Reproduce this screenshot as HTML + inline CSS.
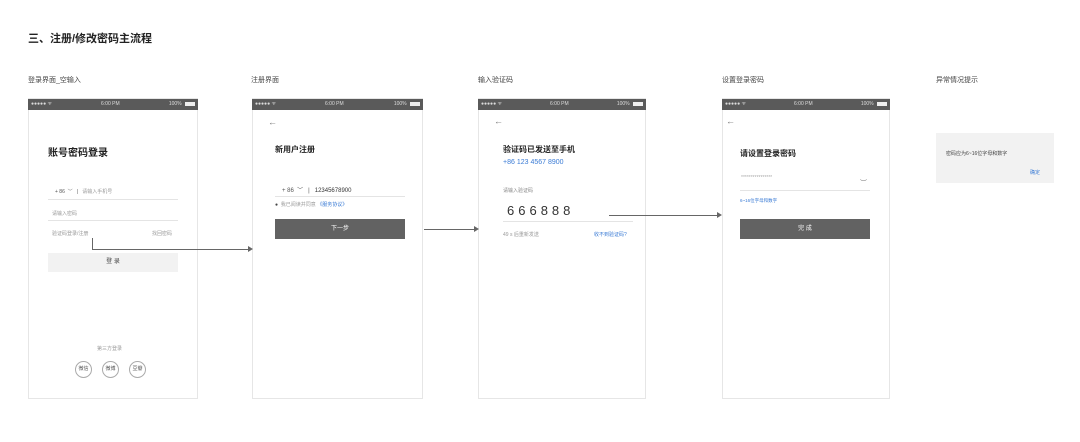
<!DOCTYPE html>
<html><head><meta charset="utf-8"><style>
*{margin:0;padding:0;box-sizing:border-box}
body{width:1080px;height:442px;background:#fff;position:relative;overflow:hidden;font-family:"Liberation Sans","Noto Sans CJK SC",sans-serif;color:#333}
.a{position:absolute;white-space:nowrap}
.ph{position:absolute;top:98px;height:301px;border:1px solid #e6e6e6;background:#fff}
.sb{position:absolute;left:-1px;right:-1px;top:0;height:11px;background:#5a5a5a;color:#ddd;font-size:5px}
.sb span{position:absolute;top:2px}
.bat{display:inline-block;width:10px;height:4px;background:#eee;vertical-align:middle;margin-left:2px}
.ln{position:absolute;height:1px;background:#e4e4e4}
.btn{position:absolute;height:20px;background:#626262;color:#fff;font-size:6px;text-align:center;line-height:20px}
.hl{position:absolute;height:1px;background:#666}
.vl{position:absolute;width:1px;background:#666}
.ah{position:absolute;width:0;height:0;border-top:3px solid transparent;border-bottom:3px solid transparent;border-left:5px solid #666}
.t{font-size:10px;font-weight:bold;color:#222}
.s{font-size:5px;color:#999}
.c{position:absolute;width:17px;height:17px;border:1px solid #aaa;border-radius:50%;font-size:5px;color:#555;text-align:center;line-height:15px}
</style></head><body>
<div class="a" style="left:28px;top:30px;font-size:11px;font-weight:bold;color:#222">三、注册/修改密码主流程</div>
<div class="a" style="left:28px;top:75px;font-size:7px;color:#444">登录界面_空输入</div>
<div class="a" style="left:251px;top:75px;font-size:7px;color:#444">注册界面</div>
<div class="a" style="left:478px;top:75px;font-size:7px;color:#444">输入验证码</div>
<div class="a" style="left:722px;top:75px;font-size:7px;color:#444">设置登录密码</div>
<div class="a" style="left:936px;top:75px;font-size:7px;color:#444">异常情况提示</div>

<!-- phones -->
<div class="ph" style="left:28px;width:170px"><div class="sb"><span style="left:3px">●●●●● ᯤ</span><span style="left:73px">6:00 PM</span><span style="right:3px">100% <i class="bat"></i></span></div></div>
<div class="ph" style="left:252px;width:171px"><div class="sb"><span style="left:3px">●●●●● ᯤ</span><span style="left:73px">6:00 PM</span><span style="right:3px">100% <i class="bat"></i></span></div></div>
<div class="ph" style="left:478px;width:168px"><div class="sb"><span style="left:3px">●●●●● ᯤ</span><span style="left:72px">6:00 PM</span><span style="right:3px">100% <i class="bat"></i></span></div></div>
<div class="ph" style="left:722px;width:168px"><div class="sb"><span style="left:3px">●●●●● ᯤ</span><span style="left:72px">6:00 PM</span><span style="right:3px">100% <i class="bat"></i></span></div></div>

<!-- frame 1 -->
<div class="a t" style="left:48px;top:144px">账号密码登录</div>
<div class="a" style="left:55px;top:188px;font-size:5px;color:#555">+ 86 &nbsp;﹀ &nbsp;&nbsp;|&nbsp;&nbsp; <span style="color:#999">请输入手机号</span></div>
<div class="ln" style="left:48px;top:199px;width:130px"></div>
<div class="a s" style="left:52px;top:210px">请输入密码</div>
<div class="ln" style="left:48px;top:220px;width:130px"></div>
<div class="a s" style="left:52px;top:230px">验证码登录/注册</div>
<div class="a s" style="left:152px;top:230px">找回密码</div>
<div class="btn" style="left:48px;top:253px;width:130px;height:19px;line-height:19px;background:#f2f2f2;color:#444">登 录</div>
<div class="a s" style="left:97px;top:345px">第三方登录</div>
<div class="c" style="left:75px;top:361px">微信</div>
<div class="c" style="left:102px;top:361px">微博</div>
<div class="c" style="left:129px;top:361px">豆瓣</div>
<div class="vl" style="left:92px;top:238px;height:12px"></div>
<div class="hl" style="left:92px;top:249px;width:156px"></div>
<div class="ah" style="left:248px;top:246px"></div>

<!-- frame 2 -->
<div class="a" style="left:268px;top:117px;font-size:9px;color:#777">←</div>
<div class="a t" style="left:275px;top:144px;font-size:8px">新用户注册</div>
<div class="a" style="left:282px;top:185px;font-size:6px;color:#555">+ 86 &nbsp;﹀ &nbsp;&nbsp;|&nbsp;&nbsp; <span style="color:#333">12345678900</span></div>
<div class="ln" style="left:275px;top:196px;width:130px"></div>
<div class="a" style="left:275px;top:201px;font-size:5px;color:#999"><span style="color:#444">●</span> &nbsp;我已阅读并同意 <span style="color:#3a7bd5">《服务协议》</span></div>
<div class="btn" style="left:275px;top:219px;width:130px">下一步</div>
<div class="hl" style="left:424px;top:229px;width:50px"></div>
<div class="ah" style="left:474px;top:226px"></div>

<!-- frame 3 -->
<div class="a" style="left:494px;top:116px;font-size:9px;color:#777">←</div>
<div class="a t" style="left:503px;top:144px;font-size:8px">验证码已发送至手机</div>
<div class="a" style="left:503px;top:159px;font-size:7px;color:#3a7bd5">+86 123 4567 8900</div>
<div class="a s" style="left:503px;top:187px;color:#888">请输入验证码</div>
<div class="a" style="left:507px;top:203px;font-size:13px;letter-spacing:4px;color:#333">666888</div>
<div class="ln" style="left:503px;top:221px;width:130px"></div>
<div class="a s" style="left:503px;top:231px">49 s 后重新发送</div>
<div class="a" style="left:594px;top:231px;font-size:5px;color:#3a7bd5">收不到验证码?</div>
<div class="hl" style="left:609px;top:215px;width:108px"></div>
<div class="ah" style="left:717px;top:212px"></div>

<!-- frame 4 -->
<div class="a" style="left:726px;top:116px;font-size:9px;color:#777">←</div>
<div class="a t" style="left:740px;top:148px;font-size:8px">请设置登录密码</div>
<div class="a s" style="left:741px;top:175px;color:#aaa">****************</div>
<div class="a" style="left:860px;top:178px;font-size:7px;color:#777">︶</div>
<div class="ln" style="left:740px;top:190px;width:130px"></div>
<div class="a" style="left:740px;top:198px;font-size:4.5px;color:#3a7bd5">6~16位字母和数字</div>
<div class="btn" style="left:740px;top:219px;width:130px">完 成</div>

<!-- dialog -->
<div class="a" style="left:936px;top:133px;width:118px;height:50px;background:#f2f2f2"></div>
<div class="a" style="left:946px;top:150px;font-size:5px;color:#444">密码应为6~16位字母和数字</div>
<div class="a" style="left:1030px;top:169px;font-size:5px;color:#3a7bd5">确定</div>
</body></html>
